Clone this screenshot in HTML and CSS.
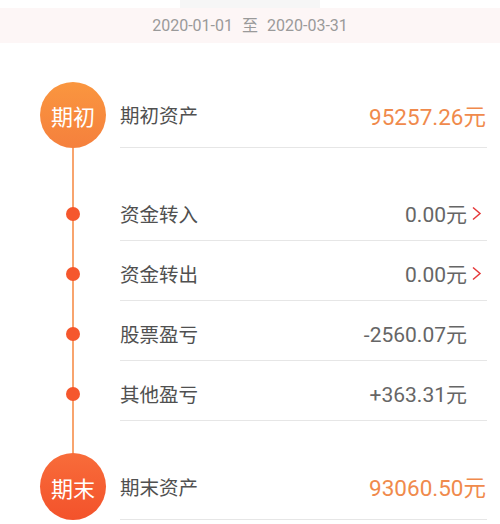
FILE: index.html
```html
<!DOCTYPE html>
<html lang="zh-CN">
<head>
    <meta charset="UTF-8">
    <meta name="viewport" content="width=device-width, initial-scale=1.0">
    <title>资产变动</title>
    <link rel="stylesheet" href="styles.css">
</head>
<body>

    <header class="period">
        <div class="period-tab"></div>
        <div class="period-bar">2020-01-01<span class="period-to">至</span>2020-03-31</div>
    </header>

    <div class="timeline">
        <div class="row row-start">
            <div class="node"><span class="badge badge-start">期初</span></div>
            <div class="content">
                <span class="label">期初资产</span>
                <span class="value value-main">95257.26元</span>
            </div>
        </div>

        <div class="row row-item">
            <div class="node"><span class="dot"></span></div>
            <div class="content">
                <span class="label">资金转入</span>
                <span class="value">0.00元</span>
                <svg class="arrow" width="11" height="15" viewBox="0 0 11 15"><path d="M2 1.5 L9 7.5 L2 13.5" fill="none" stroke="#e5393b" stroke-width="1.5"/></svg>
            </div>
        </div>

        <div class="row row-item">
            <div class="node"><span class="dot"></span></div>
            <div class="content">
                <span class="label">资金转出</span>
                <span class="value">0.00元</span>
                <svg class="arrow" width="11" height="15" viewBox="0 0 11 15"><path d="M2 1.5 L9 7.5 L2 13.5" fill="none" stroke="#e5393b" stroke-width="1.5"/></svg>
            </div>
        </div>

        <div class="row row-item">
            <div class="node"><span class="dot"></span></div>
            <div class="content">
                <span class="label">股票盈亏</span>
                <span class="value value-plain">-2560.07元</span>
            </div>
        </div>

        <div class="row row-item">
            <div class="node"><span class="dot"></span></div>
            <div class="content">
                <span class="label">其他盈亏</span>
                <span class="value value-plain">+363.31元</span>
            </div>
        </div>

        <div class="row row-end">
            <div class="node"><span class="badge badge-end">期末</span></div>
            <div class="content">
                <span class="label">期末资产</span>
                <span class="value value-main">93060.50元</span>
            </div>
        </div>
    </div>

</body>
</html>
```

FILE: styles.css
```css
:root {
    --label-color: #505050;
    --value-color: #666;
    --orange: #f08a4c;
    --line-color: #f8a46e;
    --dot-color: #f5572d;
    --border-color: #e6e6e6;
}
body {
    margin: 0;
    background: #fff;
    font-family: Roboto, "Noto Sans CJK SC", sans-serif;
}
.period-tab {
    width: 140px;
    height: 8px;
    margin: 0 auto;
    background: #f6f6f6;
}
.period-bar {
    height: 35px;
    line-height: 35px;
    background: #fdf6f6;
    color: #9a9a9a;
    font-size: 16px;
    text-align: center;
}
.period-to {
    margin: 0 9px;
}
.timeline {
    position: relative;
    margin-top: 39px;
    padding-left: 40px;
}
.timeline::before {
    content: "";
    position: absolute;
    left: 72px;
    top: 33px;
    bottom: 33px;
    width: 2px;
    background: var(--line-color);
}
.row {
    display: flex;
    position: relative;
}
.node {
    width: 66px;
    margin-right: 14px;
    display: flex;
    align-items: center;
    justify-content: center;
}
.content {
    flex: 1;
    display: flex;
    align-items: center;
    margin-right: 13px;
    border-bottom: 1px solid var(--border-color);
}
.label {
    flex: 1;
    color: var(--label-color);
    font-size: 19.5px;
}
.value {
    color: var(--value-color);
    font-size: 21px;
}
.value-plain {
    margin-right: 20px;
}
.value-main {
    color: var(--orange);
    font-size: 22.5px;
    margin-right: 1px;
}
.arrow {
    margin: 1px 5px 0 4px;
}
.badge {
    width: 66px;
    height: 66px;
    border-radius: 50%;
    color: #fff;
    font-size: 22px;
    display: flex;
    align-items: center;
    justify-content: center;
}
.badge-start {
    background: linear-gradient(#fa963f, #f5803d);
}
.badge-end {
    background: linear-gradient(#f86c3a, #f3522b);
}
.dot {
    width: 14px;
    height: 14px;
    border-radius: 50%;
    background: var(--dot-color);
}
.row-start .content {
    height: 65px;
}
.row-item {
    height: 60px;
}
.row-item .node,
.row-item .content {
    box-sizing: border-box;
    padding-top: 5px;
}
.row-start + .row-item {
    margin-top: 33px;
}
.row-end {
    margin-top: 32px;
}
.row-end .content {
    height: 66px;
}
.row-end .badge {
    height: 67px;
    width: 67px;
}
```
